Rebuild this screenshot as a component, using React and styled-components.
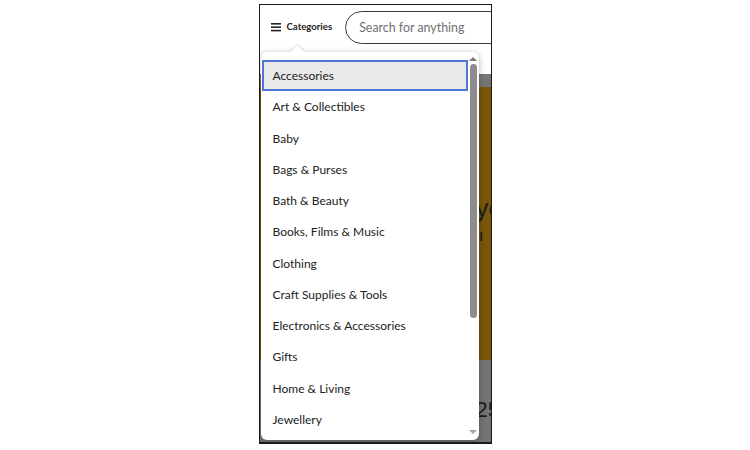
import React from "react";
import styled, { createGlobalStyle } from "styled-components";

const Global = createGlobalStyle`
  html, body { margin: 0; padding: 0; background: #fff; }
  body { font-family: Lato, "Noto Sans", Arial, sans-serif; }
`;

const Page = styled.div`
  width: 750px;
  height: 450px;
  display: flex;
  justify-content: center;
  padding-top: 4px;
  box-sizing: border-box;
`;

const Frame = styled.div`
  position: relative;
  width: 233px;
  height: 440px;
  box-sizing: border-box;
  border: 1px solid #1a1a1a;
  border-bottom-width: 2px;
  overflow: hidden;
  display: flex;
  flex-direction: column;
  background: #fff;
`;

const Header = styled.div`
  height: 43px;
  flex: none;
  display: flex;
  align-items: center;
  padding-left: 11px;
  gap: 13px;
  background: #fff;
`;

const CatButton = styled.div`
  display: flex;
  align-items: center;
  gap: 5px;
  font-size: 9.6px;
  font-weight: 700;
  color: #222;
  flex: none;
`;

const Search = styled.div`
  flex: none;
  width: 200px;
  height: 33px;
  box-sizing: border-box;
  border: 1.5px solid #3a3a3a;
  border-radius: 17px;
  display: flex;
  align-items: center;
  padding-left: 13px;
  font-size: 12.4px;
  color: #707070;
  margin-top: 1px;
`;

const Backdrop = styled.div`
  flex: 1;
  display: flex;
  flex-direction: column;
`;

const Band = styled.div`
  height: ${(p) => p.h}px;
  flex: ${(p) => (p.grow ? 1 : "none")};
  background: ${(p) => p.bg};
  display: flex;
  flex-direction: column;
  padding-left: 216px;
  box-sizing: border-box;
  color: #1c1c1c;
`;

const BigText = styled.div`
  font-family: "Liberation Sans", Arial, sans-serif;
  font-size: ${(p) => p.size}px;
  font-weight: ${(p) => p.weight || 400};
  margin-top: ${(p) => p.mt}px;
  white-space: nowrap;
  line-height: 1;
`;

const Dropdown = styled.div`
  position: absolute;
  left: 1px;
  top: 47px;
  width: 218px;
  height: 388px;
  background: #fff;
  border-radius: 6px;
  box-shadow: 0 1px 6px rgba(0, 0, 0, 0.28);
  display: flex;
  padding: 8px 0 0 1px;
  box-sizing: border-box;

  &::before {
    content: "";
    position: absolute;
    left: 32px;
    top: -5px;
    width: 9px;
    height: 9px;
    background: #fff;
    transform: rotate(45deg);
    box-shadow: -1px -1px 2px rgba(0, 0, 0, 0.12);
  }
`;

const List = styled.ul`
  list-style: none;
  margin: 0;
  padding: 0;
  flex: 1;
  overflow: hidden;
  position: relative;
`;

const Item = styled.li`
  height: 31.25px;
  box-sizing: border-box;
  display: flex;
  align-items: center;
  padding-left: 11px;
  font-size: 12px;
  color: #222;
  white-space: nowrap;
  background: ${(p) => (p.active ? "#e9e9e9" : "transparent")};
  outline: ${(p) => (p.active ? "2px solid #4d76d6" : "none")};
  outline-offset: -2px;
`;

const Scrollbar = styled.div`
  width: 11px;
  flex: none;
  display: flex;
  flex-direction: column;
  align-items: center;
  margin-top: -8px;
  padding-bottom: 3px;
`;

const Arrow = styled.div`
  width: 0;
  height: 0;
  border-left: 4px solid transparent;
  border-right: 4px solid transparent;
  ${(p) =>
    p.up
      ? "border-bottom: 4px solid #7a7a7a; margin: 5px 0 3px;"
      : "border-top: 4px solid #a3a3a3; margin-top: auto; margin-bottom: 3px;"}
`;

const Thumb = styled.div`
  width: 7px;
  height: 254px;
  border-radius: 4px;
  background: #8c8c8c;
`;

const categories = [
  "Accessories",
  "Art & Collectibles",
  "Baby",
  "Bags & Purses",
  "Bath & Beauty",
  "Books, Films & Music",
  "Clothing",
  "Craft Supplies & Tools",
  "Electronics & Accessories",
  "Gifts",
  "Home & Living",
  "Jewellery",
  "Paper & Party Supplies",
  "Pet Supplies",
];

function MenuIcon() {
  return (
    <svg width="11" height="10" viewBox="0 0 11 10">
      <rect x="0" y="1" width="10" height="1.6" fill="#222" />
      <rect x="0" y="4.4" width="10" height="1.6" fill="#222" />
      <rect x="0" y="7.8" width="10" height="1.6" fill="#222" />
    </svg>
  );
}

export default function App() {
  return (
    <>
      <Global />
      <Page>
        <Frame>
          <Header>
            <CatButton>
              <MenuIcon />
              Categories
            </CatButton>
            <Search>Search for anything</Search>
          </Header>
          <Backdrop>
            <Band h={26} bg="#fff" />
            <Band h={13} bg="#767676" />
            <Band h={273} bg="#7b560a">
              <BigText size={26} mt={108}>ye</BigText>
              <BigText size={12} weight={700} mt={10}>-l</BigText>
            </Band>
            <Band grow bg="#737373">
              <BigText size={22} mt={39}>25</BigText>
            </Band>
          </Backdrop>
          <Dropdown>
            <List>
              {categories.map((c, i) => (
                <Item key={c} active={i === 0}>
                  {c}
                </Item>
              ))}
            </List>
            <Scrollbar>
              <Arrow up />
              <Thumb />
              <Arrow />
            </Scrollbar>
          </Dropdown>
        </Frame>
      </Page>
    </>
  );
}
